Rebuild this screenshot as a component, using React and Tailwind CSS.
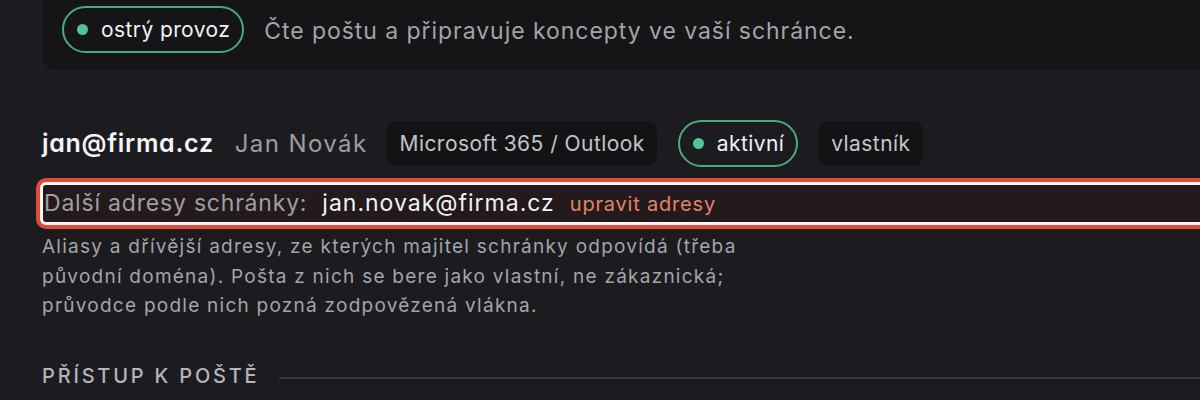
function Chip({ children }) {
  return (
    <span className="inline-flex h-[45px] items-center rounded-[10px] bg-[#131315] px-[12px] text-[21px] tracking-[0.45px] text-[#c4c4ca]">
      {children}
    </span>
  );
}

function StatusPill({ children }) {
  return (
    <span className="inline-flex h-[47px] items-center gap-[13px] rounded-full border-2 border-[#4aa981] pl-[13px] pr-[12px] text-[21px] tracking-[0.4px] text-[#f2f2f4]">
      <span className="h-[11px] w-[11px] rounded-full bg-[#52c493]" />
      {children}
    </span>
  );
}

export default function App() {
  return (
    <div className="h-[400px] w-[1200px] overflow-hidden bg-[#1c1c20] font-['Inter','Noto_Sans',sans-serif]">
      <div className="w-[1260px] pl-[42px]">
        <div className="flex h-[70px] items-start gap-[20px] rounded-bl-[14px] bg-[#151517] pl-[20px] pt-[6px]">
          <StatusPill>ostrý provoz</StatusPill>
          <span className="mt-[8px] text-[23px] tracking-[0.95px] text-[#a3a3aa]">
            Čte poštu a připravuje koncepty ve vaší schránce.
          </span>
        </div>

        <div className="mt-[50px] flex items-center gap-[21px]">
          <span className="text-[25px] font-semibold tracking-[0.7px] text-[#f4f4f6] [font-feature-settings:'cv11']">
            jan@firma.cz
          </span>
          <span className="-mr-[1px] text-[24px] tracking-[1.4px] text-[#9d9da4]">Jan Novák</span>
          <Chip>Microsoft 365 / Outlook</Chip>
          <StatusPill>aktivní</StatusPill>
          <Chip>vlastník</Chip>
        </div>

        <div className="-ml-[2px] mt-[15px] flex h-[43px] items-center gap-[15px] rounded-[6px] border-[3px] border-[#fbf4f2] bg-[#221a1c] pl-[1px] shadow-[0_0_0_4px_#e04b35]">
          <span className="text-[23px] tracking-[0.8px] text-[#a09ea3]">Další adresy schránky:</span>
          <span className="text-[23px] tracking-[1px] text-[#f2f2f4]">jan.novak@firma.cz</span>
          <span className="text-[20px] tracking-[0.8px] text-[#e2826a]">upravit adresy</span>
        </div>

        <p className="mt-[7px] max-w-[720px] text-[19px] leading-[29.5px] tracking-[1.25px] text-[#a4a4ab]">
          Aliasy a dřívější adresy, ze kterých majitel schránky odpovídá (třeba
          původní doména). Pošta z nich se bere jako vlastní, ne zákaznická;
          průvodce podle nich pozná zodpovězená vlákna.
        </p>

        <div className="mt-[40px] flex items-center gap-[20px]">
          <span className="text-[20px] font-medium tracking-[2.8px] text-[#b4b4ba]">
            PŘÍSTUP K POŠTĚ
          </span>
          <span className="mt-[4px] h-[2px] flex-1 bg-[#35353b]" />
        </div>
      </div>
    </div>
  );
}
